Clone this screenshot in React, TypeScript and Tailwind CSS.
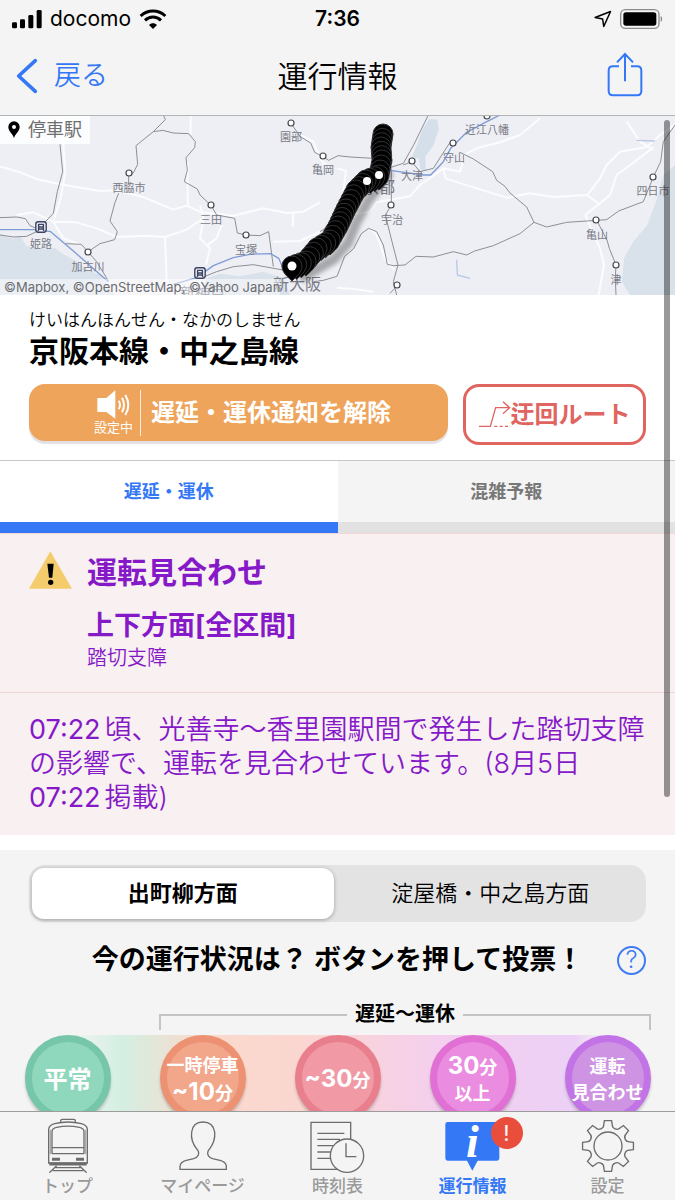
import { useState } from 'react';
import clsx from 'clsx';

type Station = {
  name: string;
  x: number;
  y: number;
  labelX: number;
  labelY: number;
};

const STATIONS: Station[] = [
  { name: '園部', x: 291, y: 8, labelX: 291, labelY: 26 },
  { name: '亀岡', x: 323, y: 41, labelX: 323, labelY: 59 },
  { name: '西脇市', x: 129, y: 58, labelX: 129, labelY: 77 },
  { name: '三田', x: 211, y: 90, labelX: 211, labelY: 109 },
  { name: '宝塚', x: 246, y: 120, labelX: 246, labelY: 139 },
  { name: '加古川', x: 88, y: 137, labelX: 88, labelY: 156 },
  { name: '近江八幡', x: 487, y: 1, labelX: 487, labelY: 19 },
  { name: '守山', x: 453, y: 28, labelX: 454, labelY: 47 },
  { name: '大津', x: 412, y: 46, labelX: 412, labelY: 65 },
  { name: '宇治', x: 391, y: 90, labelX: 392, labelY: 109 },
  { name: '亀山', x: 596, y: 105, labelX: 597, labelY: 124 },
  { name: '四日市', x: 653, y: 62, labelX: 653, labelY: 80 },
  { name: '津', x: 616, y: 150, labelX: 616, labelY: 169 },
];

// the line from Demachiyanagi in the north down to Nakanoshima
const LINE = [
  [383, 19],
  [381, 32],
  [382, 45],
  [379, 60],
  [366, 65],
  [356, 75],
  [346, 94],
  [338, 111],
  [330, 125],
  [317, 133],
  [306, 146],
  [292, 151],
];

const PINS = [
  { x: LINE[0][0], y: LINE[0][1] },
  ...LINE.slice(1).flatMap(([x2, y2], i) => {
    const [x1, y1] = LINE[i];
    const steps = Math.max(1, Math.round(Math.hypot(x2 - x1, y2 - y1) / 5));
    return Array.from({ length: steps }, (_, s) => {
      const t = (s + 1) / steps;
      return { x: x1 + (x2 - x1) * t, y: y1 + (y2 - y1) * t };
    });
  }),
];

const VOTES = [
  {
    id: 'normal',
    color: 'border-[#76c6a9] bg-[#90d8bd]',
    lines: [[{ t: '平常', c: 'text-2xl' }]],
  },
  {
    id: 'under10',
    color: 'border-[#ec9272] bg-[#f2a68a]',
    lines: [
      [{ t: '一時停車', c: 'text-lg' }],
      [
        { t: '~10', c: 'text-2xl' },
        { t: '分', c: 'text-lg' },
      ],
    ],
  },
  {
    id: 'under30',
    color: 'border-[#e97f8d] bg-[#f19aa6]',
    lines: [
      [
        { t: '~30', c: 'text-2xl' },
        { t: '分', c: 'text-lg' },
      ],
    ],
  },
  {
    id: 'over30',
    color: 'border-[#e070d3] bg-[#ea8cdf]',
    lines: [
      [
        { t: '30', c: 'text-2xl' },
        { t: '分', c: 'text-lg' },
      ],
      [{ t: '以上', c: 'text-lg' }],
    ],
  },
  {
    id: 'stopped',
    color: 'border-[#c274e6] bg-[#ce93e2]',
    lines: [
      [{ t: '運転', c: 'text-lg' }],
      [{ t: '見合わせ', c: 'text-lg' }],
    ],
  },
];

const polar = (r: number, deg: number) => {
  const a = (deg * Math.PI) / 180;
  return `${(84 + r * Math.sin(a)).toFixed(1)} ${(87 - r * Math.cos(a)).toFixed(1)}`;
};

const GEAR = Array.from({ length: 8 }, (_, i) => {
  const a = i * 45;
  return `${i === 0 ? 'M' : 'L'}${polar(77, a - 8)} L${polar(77, a + 8)} L${polar(66, a + 11)} A14 14 0 0 0 ${polar(66, a + 34)}`;
}).join(' ');

function StatusBar() {
  return (
    <div className="flex h-[37px] items-center px-3 text-[21px]">
      <div className="flex flex-1 items-center gap-2">
        <svg className="h-5 w-[30px]" viewBox="0 0 90 60">
          <rect x="0" y="40" width="15" height="18" rx="4" />
          <rect x="24" y="31" width="15" height="27" rx="4" />
          <rect x="49" y="18" width="15" height="40" rx="4" />
          <rect x="74" y="3" width="15" height="55" rx="4" />
        </svg>
        <span>docomo</span>
        <svg className="h-5 w-7" viewBox="0 0 84 60" fill="none" stroke="black">
          <path d="M5 21 C26 1 58 1 79 21" strokeWidth="9" />
          <path d="M18 34 C32 21 52 21 66 34" strokeWidth="9" />
          <path d="M42 60 L30 48 C37 41 47 41 54 48 Z" fill="black" stroke="none" />
        </svg>
      </div>
      <span className="font-semibold">7:36</span>
      <div className="flex flex-1 items-center justify-end gap-2">
        <svg className="h-[18px] w-[18px]" viewBox="0 0 48 48" fill="none" stroke="black" strokeWidth="4" strokeLinejoin="round">
          <path d="M3 20 L44 4 L26 44 L23 24 Z" />
        </svg>
        <svg className="h-5 w-[43px]" viewBox="0 0 129 60">
          <rect x="2" y="2" width="115" height="56" rx="14" fill="none" stroke="#8c8c8c" strokeWidth="4" />
          <rect x="10" y="10" width="99" height="40" rx="8" />
          <path d="M122 21 C128 23 128 37 122 39 Z" fill="#8c8c8c" />
        </svg>
      </div>
    </div>
  );
}

function Header() {
  return (
    <header className="border-b border-[#b4b4b4] bg-[#f4f4f4]">
      <StatusBar />
      <div className="grid h-[78px] grid-cols-[1fr_auto_1fr] items-center px-4">
        <button type="button" className="flex items-center gap-4 text-[27px] font-[350] text-[#3478f6]">
          <svg className="h-9 w-[22px]" viewBox="0 0 66 108" fill="none" stroke="currentColor" strokeWidth="11" strokeLinecap="round" strokeLinejoin="round">
            <path d="M58 8 L8 54 L58 100" />
          </svg>
          戻る
        </button>
        <h1 className="text-[30px] font-[350]">運行情報</h1>
        <button type="button" aria-label="共有" className="mr-4 mb-1 justify-self-end text-[#3478f6]">
          <svg className="h-[45px] w-9" viewBox="0 0 108 135" fill="none" stroke="currentColor" strokeWidth="6">
            <path d="M36 43 H18 Q5 43 5 56 V117 Q5 130 18 130 H90 Q103 130 103 117 V56 Q103 43 90 43 H72" />
            <path d="M54 88 V6 M30 31 L54 6 L78 31" />
          </svg>
        </button>
      </div>
    </header>
  );
}

function LineMap() {
  return (
    <div className="relative">
      <svg className="block h-[179px] w-full bg-[#eeeff5]" viewBox="0 1 675 179" preserveAspectRatio="xMidYMid slice">
        <filter id="pin-shadow">
          <feGaussianBlur stdDeviation="2" />
        </filter>
        <g transform="scale(0.33333)" fill="none" strokeLinejoin="round">
          <path d="M0 358 L40 372 L62 364 L78 392 L120 402 L165 398 L185 415 L232 440 L262 466 L300 480 L345 540 H0 Z M620 490 L660 476 L720 484 L790 470 L850 490 L870 540 H600 Z" fill="#d9e1ea" />
          <path d="M1288 12 L1312 14 L1316 44 L1300 92 L1276 124 L1278 168 L1262 166 L1256 128 L1232 134 L1252 88 L1268 42 Z" fill="#d5dfe9" />
          <path d="M2025 150 L1990 180 L1972 250 L1942 330 L1900 380 L1872 430 L1866 500 L1890 540 H2025 Z" fill="#d9e1ea" />
          <g stroke="#fbfcfe" strokeWidth="6">
            <path d="M0 154 L60 172 L110 192 L180 208 L300 228 L345 226 L430 246 L520 284 L560 272 L605 292 L700 302 L790 280 L860 294 L910 290 L960 262" />
            <path d="M190 0 L190 90 L196 170 L182 250 L160 320 L230 322 L300 344 L350 366 L440 362 L495 366 L560 344 L610 310 L600 270 M160 320 L190 370 L240 388 M50 300 L100 292 L160 320" />
            <path d="M572 0 V60 M562 140 L564 275 M495 366 L500 500 M610 310 L600 370 L630 400 L618 450 M665 330 L650 370 L620 392 M880 290 L878 335 M820 380 L900 378 L960 350" />
            <path d="M900 60 L940 80 L960 130 L1000 180" />
            <path d="M1620 10 L1560 60 L1500 82 L1430 100 L1395 118 L1380 170 L1330 160 L1336 190 L1430 220 L1520 248 L1590 235 L1660 246 L1762 240 L1800 190 L1820 150 L1860 110 L1940 96 L1980 60 L2025 30" />
            <path d="M1880 20 L1920 80 L1960 104 M1960 98 L1850 180 L1830 240 L1756 300 L1800 400 L1812 450 L1796 540 M1762 240 L1800 270 M1040 300 L1110 290 L1130 262 L1230 244 L1260 210 L1330 160" />
            <path d="M1110 340 L1130 360 L1155 430 L1182 465 M1011 518 L1060 522 L1120 530 M1011 160 L1038 168 L1030 230" />
          </g>
          <g stroke="#8d8f94" strokeWidth="3">
            <path d="M180 88 L188 170 L172 230 L160 295 L122 335 M0 308 L50 306 L76 311 L90 332 L118 344 M0 360 L40 366 L80 364 L118 346" />
            <path d="M490 0 L496 14 L460 50 L408 92 L413 148 L400 174 L386 176 V210 M460 50 L488 46 L520 54 L566 56 L586 80 L584 98 L558 128 L562 166 L553 200 L592 222 L600 240 L634 272 L650 300 L704 310 L712 354 L738 360 L780 362 L806 350 L820 455" />
            <path d="M356 235 L345 262 L330 318 L352 350 L344 374 L300 386 L263 411 M196 386 L244 388 L290 440 L325 498 M600 490 L650 470 L700 455 L760 449 L860 467" />
            <path d="M873 25 L900 64 L932 84 L944 112 L967 124 L986 136 L1014 122 L1050 126 L1120 130 M960 350 L990 330 L1010 325" />
            <path d="M1285 0 L1242 88 L1210 145 L1170 158 M1210 150 L1235 140 L1260 170 L1300 160 L1348 85" />
            <path d="M1380 112 L1420 132 L1478 170 L1490 196 L1515 214 L1530 234 L1580 276 L1602 322 L1560 356 L1480 392 L1424 408 L1400 420 L1360 410 L1300 426 L1248 424 L1215 450 L1180 452 L1162 448 L1150 390 L1130 350 L1106 340 L1084 356 L1060 402 L1034 424 L1011 484" />
            <path d="M1602 322 L1640 336 L1700 322 L1790 316 L1820 314 L1856 288 L1930 260 L1960 186 L1982 140 L1990 80 L2025 30 M1790 316 L1808 350 L1822 378 L1828 400 L1848 450 L1846 490 L1848 540" />
            <path d="M1174 160 V270 L1156 300 L1176 380 L1194 450 L1180 500 L1190 540 M1192 512 L1170 535 M940 500 L970 496 L1011 484" />
          </g>
          <g stroke="#7f9bd6" strokeWidth="4">
            <path d="M0 344 L112 344 L152 350 L220 408 L325 500 M520 508 L590 488 L640 452 L700 428 L750 418 L812 416 L836 430 L850 462" />
            <path d="M1170 166 L1270 180 L1292 180 L1330 140 L1352 100 L1400 52 L1450 25 L1500 0" />
            <path d="M1370 434 L1372 480 L1410 490 M1910 76 L1965 78" stroke="#b9c8e6" />
          </g>
        </g>

        <g className="font-['Noto_Sans_CJK_JP',sans-serif]" fontSize="11" textAnchor="middle" fill="#797b85">
          {STATIONS.map((s) => (
            <g key={s.name}>
              <circle cx={s.x} cy={s.y} r="3" fill="#fff" stroke="#45474c" strokeWidth="1.2" />
              <text x={s.labelX} y={s.labelY}>
                {s.name}
              </text>
            </g>
          ))}
          <circle cx="397" cy="170" r="3" fill="#fff" stroke="#45474c" strokeWidth="1.2" />
          <text x="41" y="133">姫路</text>
          <text x="297" y="175" fontSize="16">新大阪</text>
          <text x="379" y="78" fontSize="16">京都</text>
        </g>
        {[
          [41, 112],
          [200, 158],
        ].map(([x, y]) => (
          <g key={x} transform={`translate(${x} ${y})`} fill="none" stroke="#3d4463" strokeWidth="1.4">
            <rect x="-5.2" y="-5.2" width="10.4" height="10.4" rx="2.4" fill="#eef0f6" />
            <path d="M-2.4 2 V-2.6 H2.4 V2 Z M-2.4 0 H2.4 M-2 2 L-3 4 M2 2 L3 4" />
          </g>
        ))}

        <path d="M388 60 L368 86 L356 108 L348 128 L334 144 L304 162" fill="none" stroke="#000" strokeOpacity="0.3" strokeWidth="10" strokeLinecap="round" filter="url(#pin-shadow)" />
        {PINS.map((p, i) => (
          <path
            key={i}
            d={`M${p.x} ${p.y + 15} C${p.x - 4} ${p.y + 11} ${p.x - 10} ${p.y + 7} ${p.x - 10} ${p.y} A10 10 0 0 1 ${p.x + 10} ${p.y} C${p.x + 10} ${p.y + 7} ${p.x + 4} ${p.y + 11} ${p.x} ${p.y + 15} Z`}
            stroke="#333"
            strokeWidth="1"
          />
        ))}
        <circle cx="379" cy="60" r="4" fill="#fff" />
        <circle cx="367" cy="66" r="4" fill="#fff" />
        <circle cx="292" cy="151" r="4.5" fill="#fff" />
      </svg>
      <div className="absolute top-0 left-0 flex h-7 items-center gap-2 bg-white/85 px-2 text-lg text-[#6e6e6e]">
        <svg className="h-[18px] w-3" viewBox="0 0 36 54">
          <path d="M18 52 C14 36 1 32 1 18 A17 17 0 0 1 35 18 C35 32 22 36 18 52 Z" fill="black" />
          <circle cx="18" cy="18" r="6" fill="white" />
        </svg>
        停車駅
      </div>
      <small className="absolute bottom-0 left-0 bg-white/50 pl-1 text-[13px] leading-4 text-[#6b6b70]">
        ©Mapbox, ©OpenStreetMap, ©Yahoo Japan
      </small>
      <div className="absolute bottom-0 left-[180px] h-4 overflow-hidden">
        <p className="pt-1 text-[15px] leading-5 text-[#797b85]/50">新神戸</p>
      </div>
    </div>
  );
}

function LineTitle() {
  return (
    <section className="px-[29px] pt-3 pb-[15px]">
      <p className="text-[17px] leading-[26px] font-[350]">けいはんほんせん・なかのしません</p>
      <h2 className="text-[30px] leading-9 font-bold">京阪本線・中之島線</h2>
      <div className="mt-[15px] flex items-start gap-[15px]">
        <button
          type="button"
          className="flex h-[57px] flex-1 items-center justify-center gap-[10px] rounded-2xl bg-[#eea45b] pl-2 text-white shadow-[0_3px_1px_#e3e0e3]"
        >
          <span className="flex items-center gap-[7px]">
            <span className="flex flex-col items-center">
              <svg className="h-[29px] w-[33px]" viewBox="0 0 99 87" fill="none" stroke="white" strokeWidth="6">
                <path d="M1 24 H28 L55 1 V86 L28 66 H1 Z" fill="white" stroke="none" />
                <path d="M65 32 Q73 45 65 58 M75 23 Q87 45 75 67 M85 15 Q103 45 85 75" />
              </svg>
              <span className="text-[13px] leading-4">設定中</span>
            </span>
            <span className="h-[46px] w-px bg-white/80" />
          </span>
          <span className="text-2xl font-bold">遅延・運休通知を解除</span>
        </button>
        <button
          type="button"
          className="flex h-[61px] w-[183px] items-center justify-center rounded-2xl border-[3px] border-[#e06460] text-2xl font-bold text-[#e06460]"
        >
          <svg className="h-[27px] w-8" viewBox="0 0 96 81" fill="none" stroke="currentColor" strokeWidth="4">
            <path d="M0 76 H34 L50 20 H92 M72 2 L92 20 L72 38" />
            <path d="M46 76 H90" strokeDasharray="9 7" />
          </svg>
          迂回ルート
        </button>
      </div>
    </section>
  );
}

function Tabs() {
  const [tab, setTab] = useState<'delay' | 'crowd'>('delay');
  const tabs = [
    { id: 'delay', label: '遅延・運休' },
    { id: 'crowd', label: '混雑予報' },
  ] as const;

  return (
    <div className="grid grid-cols-2 border-t border-[#c8c8c8]" role="tablist">
      {tabs.map((t) => (
        <button
          key={t.id}
          type="button"
          role="tab"
          aria-selected={tab === t.id}
          onClick={() => setTab(t.id)}
          className={clsx(
            'h-[72px] border-b-11 text-lg font-bold',
            tab === t.id
              ? 'border-[#3478f6] bg-white text-[#3478f6]'
              : 'border-[#e2e2e2] bg-[#f4f4f4] text-[#777]',
          )}
        >
          {t.label}
        </button>
      ))}
    </div>
  );
}

function Alert() {
  return (
    <section className="border-t border-[#f5d5d6] bg-[#f9f0f1] text-[#8519c8]">
      <div className="flex gap-[15px] border-b border-[#f2d3d4] px-[29px] pt-4 pb-5">
        <svg className="mt-[1px] h-[38px] w-[43px]" viewBox="0 0 129 114">
          <path d="M64 1 L129 113 H0 Z" fill="#f5cc6c" />
          <path d="M55 38 H74 L70 80 H60 Z" fill="black" />
          <circle cx="65" cy="94" r="8" fill="black" />
        </svg>
        <div>
          <h3 className="text-[30px] leading-[44px] font-bold">運転見合わせ</h3>
          <p className="mt-[14px] text-[27px] leading-9 font-bold">上下方面[全区間]</p>
          <p className="text-xl leading-7 font-[350]">踏切支障</p>
        </div>
      </div>
      <p className="pt-5 pr-6 pb-5 pl-[29px] text-[27px] leading-[34px] font-[350]">
        <time className="mr-1 font-normal">07:22</time>
        頃、光善寺〜香里園駅間で発生した踏切支障の影響で、運転を見合わせています。(8月5日
        <br />
        <time className="mr-1 font-normal">07:22</time>
        掲載)
      </p>
    </section>
  );
}

function Vote() {
  const [direction, setDirection] = useState('出町柳方面');

  return (
    <section className="mt-[15px] bg-[#f4f4f4] pt-[15px]">
      <div className="mx-[29px] grid h-[57px] grid-cols-2 rounded-2xl bg-[#e3e3e4] p-[3px] text-[22px]">
        {['出町柳方面', '淀屋橋・中之島方面'].map((d) => (
          <button
            key={d}
            type="button"
            onClick={() => setDirection(d)}
            className={clsx(
              'rounded-xl first:mr-1',
              d === direction
                ? 'bg-white font-bold shadow-[0_1px_4px_#0000004d]'
                : 'font-[350]',
            )}
          >
            {d}
          </button>
        ))}
      </div>

      <div className="mt-4 grid grid-cols-[1fr_auto_1fr] items-center px-[29px]">
        <h3 className="col-start-2 text-[27px] leading-[44px] font-bold">
          今の運行状況は？ ボタンを押して投票！
        </h3>
        <button
          type="button"
          aria-label="ヘルプ"
          className="flex size-[29px] items-center justify-center justify-self-end rounded-full border-2 border-[#3f7cf2] text-2xl font-light text-[#3f7cf2]"
        >
          ?
        </button>
      </div>

      <div className="mt-4 mr-6 ml-[159px] flex items-center gap-2">
        <span className="mt-4 h-4 flex-1 border-t-2 border-l-2 border-[#c4c4c4]" />
        <span className="text-xl leading-7 font-bold">遅延〜運休</span>
        <span className="mt-4 h-4 flex-1 border-t-2 border-r-2 border-[#c4c4c4]" />
      </div>

      <div className="mt-[5px] grid grid-cols-5 bg-[linear-gradient(to_right,transparent_10%,#d3efe2_18%,#fadacb_30%,#fbd5d3_48%,#f4cfee_65%,#ecd0f6_85%,transparent_90%)]">
        {VOTES.map((v) => (
          <button
            key={v.id}
            type="button"
            className={clsx(
              'flex size-[86px] flex-col items-center justify-center justify-self-center rounded-full border-[7px] pt-1 font-bold whitespace-nowrap text-white shadow-[0_3px_3px_#00000033]',
              v.color,
            )}
          >
            {v.lines.map((line, i) => (
              <span key={i} className="flex items-baseline">
                {line.map((part) => (
                  <span key={part.t} className={clsx(part.c, 'leading-[26px]')}>
                    {part.t}
                  </span>
                ))}
              </span>
            ))}
          </button>
        ))}
      </div>
    </section>
  );
}

function TrainIcon() {
  return (
    <>
      <path d="M62 18 V12 Q62 7 67 7 H101 Q106 7 106 12 V18" />
      <path d="M26 138 V36 Q28 24 44 20 Q84 10 124 20 Q140 24 142 36 V138 Z" />
      <path d="M36 110 V44 Q36 34 50 31 Q84 24 118 31 Q132 34 132 44 V110" />
      <path d="M36 92 H132 M36 110 H132" />
      <path d="M31 112 V38 M137 112 V38" stroke="#aaa" />
      <path d="M36 127 H60 M108 127 H132" strokeWidth="9" />
      <path d="M28 141 H140" strokeWidth="9" />
      <path d="M50 146 L28 167 M118 146 L140 167 M46 152 H122 M38 161 H130" />
    </>
  );
}

function PersonIcon() {
  return (
    <path d="M15 157 V147 Q17 134 34 130 L56 125 Q71 120 71 108 Q71 102 66 97 Q46 72 50 45 Q54 15 84 15 Q114 15 119 45 Q122 72 103 97 Q98 102 98 108 Q98 120 113 125 L135 130 Q152 134 154 147 V157 Z" />
  );
}

function TimetableIcon() {
  return (
    <>
      <path d="M3 16 H122 V157 H3 Z M22 49 H103 M22 67 H90 M22 86 H70 M22 105 H64 M22 124 H64" />
      <circle cx="111" cy="116" r="50" fill="#f4f4f4" />
      <path d="M108 79 V119 H139" />
    </>
  );
}

function InfoIcon() {
  return (
    <g stroke="none">
      <path d="M8 15 H156 Q163 15 163 22 V124 Q163 131 156 131 H98 L82 161 L66 131 H8 Q1 131 1 124 V22 Q1 15 8 15 Z" fill="#3478f6" />
      <text x="82" y="119" textAnchor="middle" fill="white" fontSize="138" fontWeight="bold" fontStyle="italic" className="font-['Liberation_Serif',serif]">
        i
      </text>
    </g>
  );
}

function GearIcon() {
  return (
    <>
      <path d={`${GEAR} Z`} />
      <circle cx="84" cy="87" r="42" />
    </>
  );
}

const NAV = [
  { label: 'トップ', Icon: TrainIcon },
  { label: 'マイページ', Icon: PersonIcon },
  { label: '時刻表', Icon: TimetableIcon },
  { label: '運行情報', Icon: InfoIcon, active: true, badge: '!' },
  { label: '設定', Icon: GearIcon },
];

function BottomNav() {
  return (
    <nav className="grid grid-cols-5 border-t border-[#9c9c9c] bg-[#f4f4f4] pt-[5px] pb-1">
      {NAV.map(({ label, Icon, active, badge }) => (
        <a
          key={label}
          href="#"
          className={clsx(
            'relative flex flex-col items-center gap-[3px] text-[17px] leading-5',
            active ? 'font-bold text-[#3478f6]' : 'font-medium text-[#9a9a9a]',
          )}
        >
          <svg className="size-14" viewBox="0 0 168 168" fill="none" stroke="#6c6c6c" strokeWidth="4">
            <Icon />
          </svg>
          {label}
          {badge && (
            <span className="absolute top-0 left-1/2 ml-[18px] flex size-8 items-center justify-center rounded-full bg-[#e94e3c] text-[22px] font-normal text-white">
              {badge}
            </span>
          )}
        </a>
      ))}
    </nav>
  );
}

export default function App() {
  return (
    <div className="flex h-screen flex-col bg-white font-['Inter','Noto_Sans_CJK_JP',sans-serif] text-black" lang="ja">
      <Header />
      <main className="relative min-h-0 flex-1 overflow-hidden">
        <LineMap />
        <LineTitle />
        <Tabs />
        <Alert />
        <Vote />
        <div className="absolute top-1 right-[5px] h-[68%] w-[6px] rounded-full bg-black/40" />
      </main>
      <BottomNav />
    </div>
  );
}
